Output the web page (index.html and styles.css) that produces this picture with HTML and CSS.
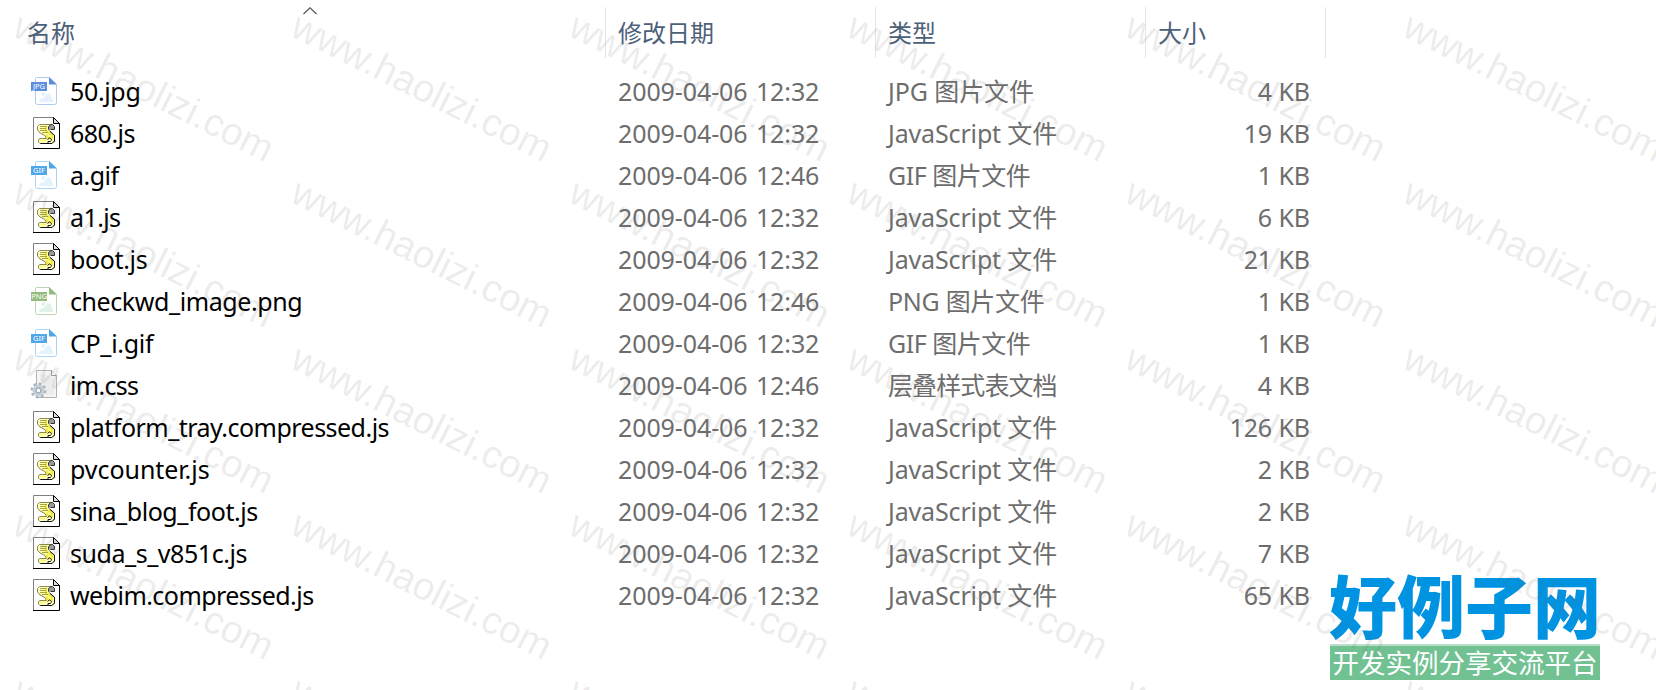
FILE: index.html
```
<!DOCTYPE html>
<html lang="zh-CN">
<head>
    <meta charset="UTF-8">
    <meta name="viewport" content="width=device-width, initial-scale=1.0">
    <title>文件列表</title>
    <link rel="stylesheet" href="styles.css">
</head>
<body>
    <!-- Icon shapes shared by the rows -->
    <svg class="icon-defs" width="0" height="0">
        <symbol id="icon-image" viewBox="0 0 28 30">
            <path d="M6.5 1.5H19L26.5 8.5V26.5Q26.5 28.5 24.5 28.5H7.5Q5.5 28.5 5.5 26.5V2.5Q5.5 1.5 6.5 1.5Z" fill="#fff" stroke="var(--line)"/>
            <path d="M19 1L27 8.5H19Z" fill="var(--tag)"/>
            <circle cx="13.5" cy="18" r="2" fill="var(--soft)"/>
            <path d="M9 26Q10 21.5 13 22.5L17.5 17.5Q19 16.5 20.5 18.5L23 24.5V26Z" fill="var(--soft)"/>
            <rect x="1" y="6" width="16" height="9" fill="var(--tag)"/>
        </symbol>
        <symbol id="icon-js" viewBox="0 0 27 32">
            <path d="M.5.5H20.5L26.5 6.5V31.5H.5Z" fill="#fff"/>
            <path d="M.5 31V.5H20.5" fill="none" stroke="#808080"/>
            <path d="M0 31.5H26.5V6" fill="none" stroke="#000"/>
            <path d="M20.5 .5V6.5H26.5Z" fill="#ddd" stroke="#000"/>
            <path d="M6.5 7.5H18.5L16 9.500V13.5L21.500 18V24L19 26.500H7L5.500 25V22.500L7 21.500H13.500L12 18.500L7 16L4.500 13V9.500Z" fill="#ffffc4" stroke="#8b8a3c"/>
            <path d="M13 9V14L19 18.500V21L15 20.500L13.500 17.500" fill="none" stroke="#f2ee2a" stroke-width="2"/>
            <path d="M7 9.500H14M7 11.500H13M7 13.500H14M9 15.500H15" stroke="#aaa531"/>
            <path d="M15.500 12.500V10L17.500 7.500H19.500L21.500 9.500V12.500H17.500" fill="#9b9b9b" stroke="#333"/>
            <path d="M17 14.500L21.500 18.500V24L19 26.500H7.500M14.500 22.500L16.500 21L18.500 22.500L17.500 24.500H15V26" fill="none" stroke="#111"/>
            <path d="M7 23.500H13" stroke="#fff600" stroke-dasharray="1 1"/>
            <path d="M17 22.500V24" stroke="#fff"/>
        </symbol>
        <symbol id="icon-css" viewBox="0 0 28 32">
            <path d="M6.5 1.5H21.5L26.5 6.5V28.5H6.5Z" fill="#f5f5f5" stroke="#b2b2b2"/>
            <path d="M10 4L24 9V26H12Z" fill="#ececec"/>
            <path d="M21.5 1.5V6.5H26.5" fill="#fff" stroke="#999"/>
            <circle cx="8.5" cy="21.5" r="6.6" fill="none" stroke="#a3b2bf" stroke-width="2.600" stroke-dasharray="2.600 2.580"/>
            <circle cx="8.5" cy="21.5" r="4.400" fill="#f5f5f5" stroke="#c3cfd9" stroke-width="3.400"/>
            <circle cx="8.5" cy="21.5" r="2.500" fill="#f8f8f8" stroke="#82929f"/>
        </symbol>
    </svg>

    <div class="explorer">
        <div class="header">
            <div class="col">名称
                <svg class="sort" viewBox="0 0 14 8"><path d="M.5 7L7 .8L13.5 7" fill="none" stroke="#555" stroke-width="1.2"/></svg>
            </div>
            <div class="col">修改日期</div>
            <div class="col">类型</div>
            <div class="col">大小</div>
        </div>
        <div class="list" id="list"></div>
    </div>

    <div class="logo">
        <div class="logo-name">好例子网</div>
        <div class="logo-slogan">开发实例分享交流平台</div>
    </div>

    <svg class="watermark" width="1656" height="690">
        <defs>
            <g id="mark">
                <text transform="translate(10.5 35) rotate(26.6)">www.haolizi.com</text>
            </g>
        </defs>
    </svg>

    <script>
        // name, date, type, size, name letter spacing
        const files = [
            ['50.jpg', '2009-04-06 12:32', 'jpg', '4 KB', -0.35],
            ['680.js', '2009-04-06 12:32', 'js', '19 KB', -0.5],
            ['a.gif', '2009-04-06 12:46', 'gif', '1 KB', -0.5],
            ['a1.js', '2009-04-06 12:32', 'js', '6 KB', -0.6],
            ['boot.js', '2009-04-06 12:32', 'js', '21 KB', -0.35],
            ['checkwd_image.png', '2009-04-06 12:46', 'png', '1 KB', -0.42],
            ['CP_i.gif', '2009-04-06 12:32', 'gif', '1 KB', -0.3],
            ['im.css', '2009-04-06 12:46', 'css', '4 KB', -0.7],
            ['platform_tray.compressed.js', '2009-04-06 12:32', 'js', '126 KB', -0.52],
            ['pvcounter.js', '2009-04-06 12:32', 'js', '2 KB', -0.05],
            ['sina_blog_foot.js', '2009-04-06 12:32', 'js', '2 KB', -0.45],
            ['suda_s_v851c.js', '2009-04-06 12:32', 'js', '7 KB', -0.45],
            ['webim.compressed.js', '2009-04-06 12:32', 'js', '65 KB', -0.55]
        ];

        const types = {
            jpg: 'JPG 图片文件',
            gif: 'GIF 图片文件',
            png: 'PNG 图片文件',
            js: 'JavaScript 文件',
            css: '层叠样式表文档'
        };

        function fileIcon(ext) {
            if (ext === 'js' || ext === 'css') {
                return `<svg class="icon-${ext}"><use href="#icon-${ext}"/></svg>`;
            }
            return `<svg class="icon-image ${ext}"><use href="#icon-image"/><text x="9" y="13">${ext.toUpperCase()}</text></svg>`;
        }

        document.getElementById('list').innerHTML = files.map(([name, date, ext, size, spacing]) => `
            <div class="row">
                <div class="name" style="letter-spacing: ${spacing}px"><span class="icon-box">${fileIcon(ext)}</span>${name}</div>
                <div class="date">${date}</div>
                <div class="type type-${ext}">${types[ext]}</div>
                <div class="size">${size}</div>
            </div>`).join('');

        // Repeat the watermark over the whole page
        let marks = '';
        for (let y = 0; y < 690; y += 166) {
            for (let x = 0; x < 1656; x += 278) {
                marks += `<use href="#mark" x="${x}" y="${y}"/>`;
            }
        }
        document.querySelector('.watermark').insertAdjacentHTML('beforeend', marks);
    </script>
</body>
</html>
```
FILE: styles.css
```
* {
    margin: 0;
    padding: 0;
    box-sizing: border-box;
}

body {
    width: 1656px;
    height: 690px;
    overflow: hidden;
    position: relative;
    background: #fff;
    color: #6d6d6d;
    font-family: "Noto Sans", "Noto Sans CJK SC", sans-serif;
    font-size: 25px;
}

.icon-defs {
    position: absolute;
}

.explorer {
    padding-top: 7px;
}

.header,
.row {
    display: grid;
    grid-template-columns: 606px 270px 270px 180px;
}

.header {
    height: 51px;
    color: #4c607a;
    font-family: "Noto Sans CJK SC", sans-serif;
    font-size: 24px;
    line-height: 50px;
}

.col {
    position: relative;
    padding-left: 12px;
    border-right: 1px solid #e5e5e5;
}

.col:first-child {
    padding-left: 27px;
}

.sort {
    position: absolute;
    left: 303px;
    top: 0;
    width: 14px;
    height: 8px;
}

.list {
    margin-top: 12px;
}

.row {
    height: 42px;
    line-height: 42px;
    white-space: nowrap;
}

.name {
    display: flex;
    padding-left: 30px;
    color: #000;
}

.icon-box {
    display: flex;
    align-items: center;
    width: 40px;
    letter-spacing: 0;
}

.icon-image {
    width: 28px;
    height: 30px;
}

.icon-image text {
    fill: #fff;
    font-size: 7.5px;
    text-anchor: middle;
}

.icon-js {
    width: 27px;
    height: 32px;
    margin-left: 3px;
}

.icon-css {
    width: 28px;
    height: 32px;
}

.jpg {
    --tag: #5b8fdc;
    --line: #b0caf0;
    --soft: #e6f0fe;
}

.gif {
    --tag: #4fa6e8;
    --line: #a9d4f5;
    --soft: #e2f3fe;
}

.png {
    --tag: #92bb7c;
    --line: #bdd6b0;
    --soft: #e0f1e6;
}

.date,
.type {
    padding-left: 12px;
}

.date {
    letter-spacing: -0.1px;
    word-spacing: 2px;
}

.type-jpg {
    letter-spacing: -0.1px;
}

.type-js {
    letter-spacing: -0.15px;
}

.type-gif {
    letter-spacing: -0.5px;
}

.type-png {
    letter-spacing: -0.3px;
}

.type-css {
    letter-spacing: -0.9px;
}

.size {
    padding-right: 16px;
    letter-spacing: -0.1px;
    text-align: right;
}

.logo {
    position: absolute;
    left: 1330px;
    top: 570px;
    width: 270px;
    font-family: "Noto Sans CJK SC", sans-serif;
    white-space: nowrap;
}

.logo-name {
    height: 74px;
    margin-left: -1px;
    color: #0093e1;
    font-size: 68px;
    font-weight: 900;
    line-height: 68px;
}

.logo-slogan {
    height: 36px;
    border-top: 2px solid #b9dfc8;
    background: #72c193;
    color: #fff;
    font-size: 26.5px;
    line-height: 31px;
    text-align: center;
}

.watermark {
    position: absolute;
    left: 0;
    top: 0;
    pointer-events: none;
}

.watermark text {
    fill: rgba(110, 110, 110, 0.13);
    font-family: "Liberation Sans", Arial, sans-serif;
    font-size: 38.6px;
}
```
